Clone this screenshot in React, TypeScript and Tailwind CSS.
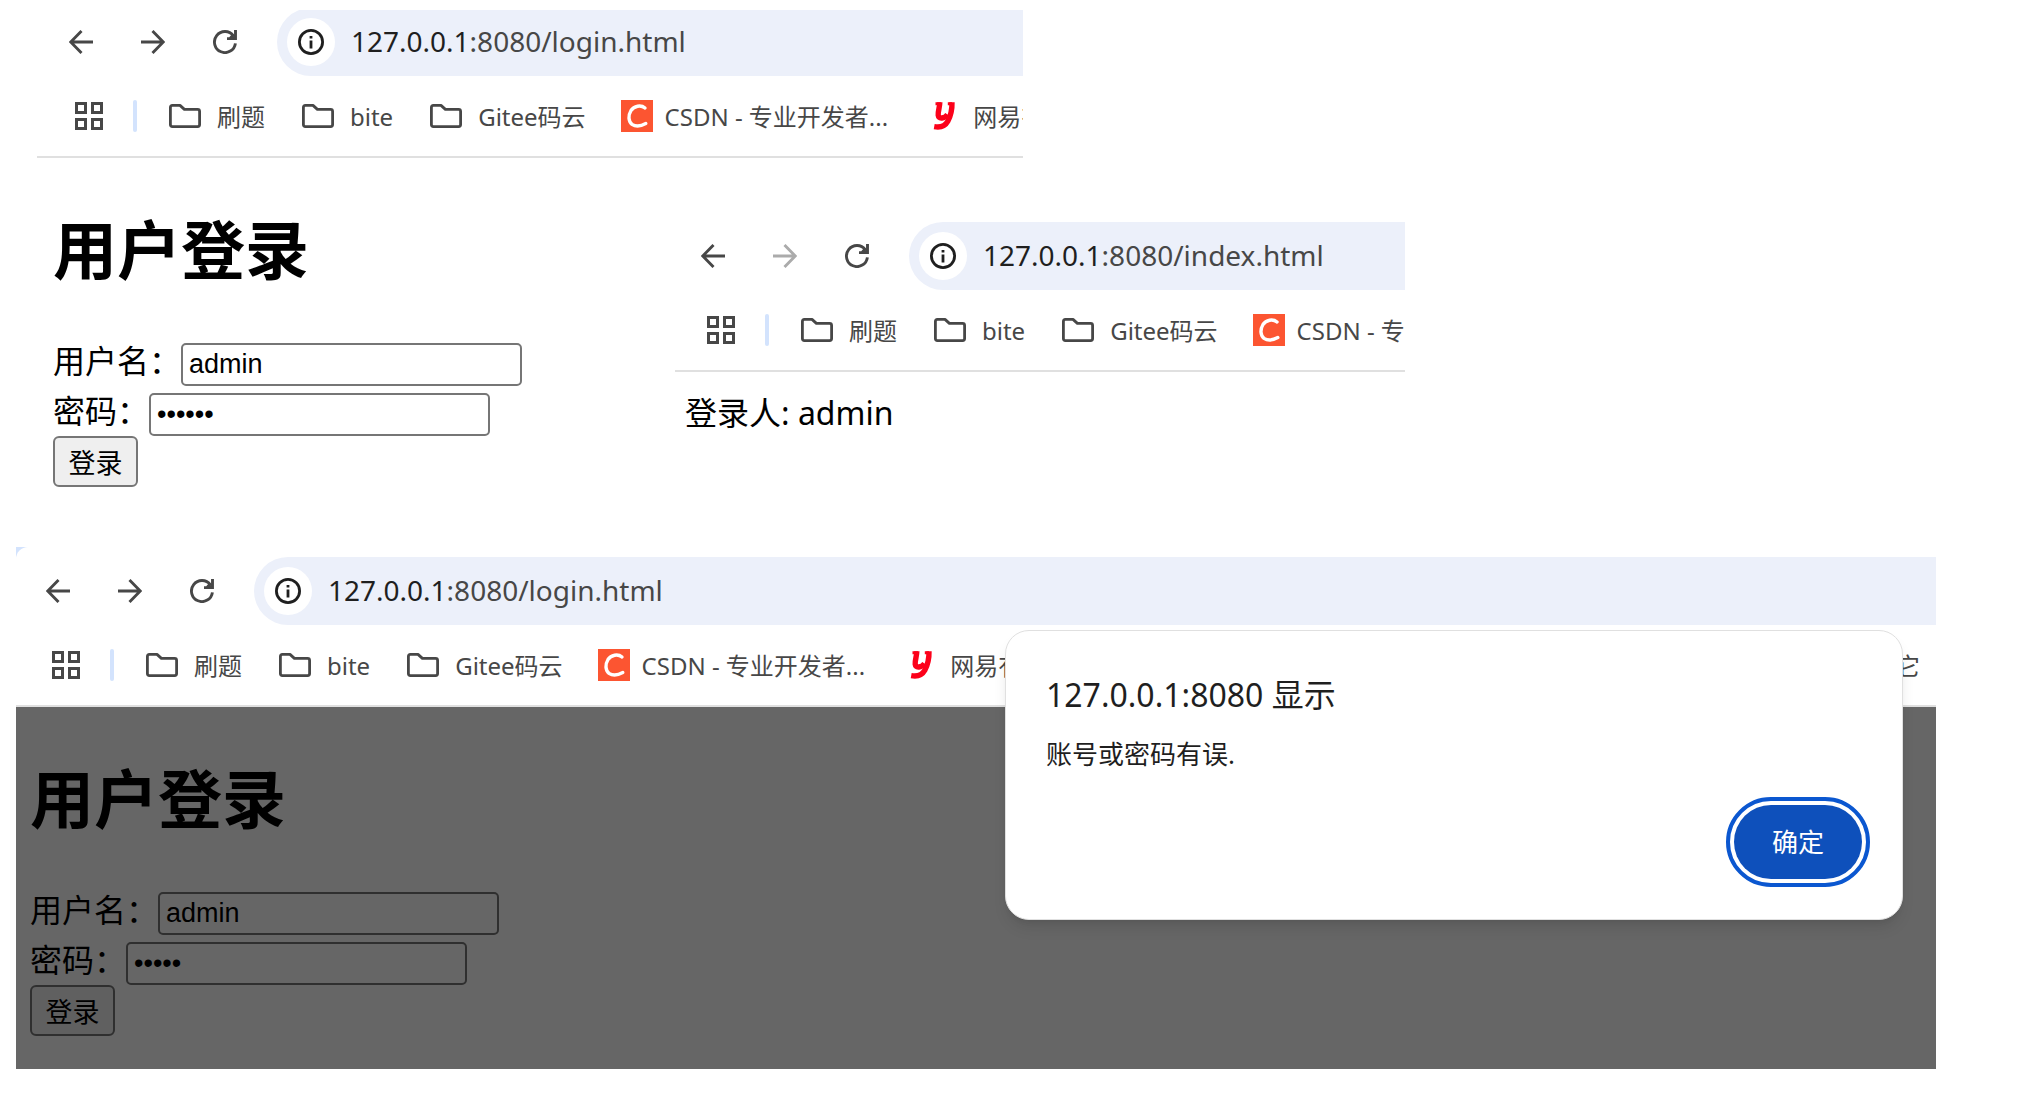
import type { ReactNode } from "react";

const uiFont = "font-['Noto_Sans','Noto_Sans_CJK_SC',sans-serif]";

const folders = ["刷题", "bite", "Gitee码云"];

function ArrowIcon({ forward = false }: { forward?: boolean }) {
  return (
    <svg width="24" height="24" viewBox="0 0 24 24" fill="none" stroke="currentColor" strokeWidth="2.9" aria-hidden="true">
      {forward ? (
        <path d="M0 12H22M11.5 1L22.3 12L11.5 23" />
      ) : (
        <path d="M24 12H2M12.5 1L1.7 12L12.5 23" />
      )}
    </svg>
  );
}

function ReloadIcon() {
  return (
    <svg width="24" height="24" viewBox="0 0 24 24" fill="none" stroke="currentColor" strokeWidth="2.9" aria-hidden="true">
      <path d="M22.4 13.3A10.5 10.5 0 1 1 20.4 5.8" />
      <path d="M22.5 0V8.6H14M22 8L17.5 8L20.5 4.5" />
    </svg>
  );
}

function InfoIcon() {
  return (
    <svg width="26" height="26" viewBox="0 0 26 26" fill="none" stroke="currentColor" strokeWidth="2.8" aria-hidden="true">
      <circle cx="13" cy="13" r="11.6" />
      <path d="M13 11.6V19.4M13 7V9.6" />
    </svg>
  );
}

function GridIcon() {
  return (
    <svg width="28" height="28" viewBox="0 0 28 28" fill="none" stroke="currentColor" strokeWidth="3" aria-hidden="true">
      <path d="M1.5 1.5h9v9h-9zM17.5 1.5h9v9h-9zM1.5 17.5h9v9h-9zM17.5 17.5h9v9h-9z" />
    </svg>
  );
}

function FolderIcon() {
  return (
    <svg width="36" height="24" viewBox="0 0 36 24" fill="none" stroke="currentColor" strokeWidth="2.8" strokeLinejoin="round" aria-hidden="true">
      <path d="M5.4 1.4H13L17.4 5.4H30.6Q32.6 5.4 32.6 7.4V20.6Q32.6 22.6 30.6 22.6H5.4Q3.4 22.6 3.4 20.6V3.4Q3.4 1.4 5.4 1.4Z" />
    </svg>
  );
}

function CsdnIcon() {
  return (
    <svg width="32" height="32" viewBox="0 0 32 32" fill="none" aria-hidden="true">
      <path d="M0 0h32v32H0z" fill="#fc5531" />
      <path d="M24 8C20 4.6 13 5.8 10 10.5C7 15.5 7.3 21.5 11 24.3C15 27 21 25.6 24.8 23.6" stroke="#fff" strokeWidth="3.4" strokeLinecap="round" />
    </svg>
  );
}

function YoudaoIcon() {
  return (
    <svg width="32" height="32" viewBox="0 0 32 32" fill="none" stroke="#fc011a" strokeWidth="5.4" aria-hidden="true">
      <path d="M10.8 2.3C10.8 7 8.8 11.500 9.200 15.200C9.800 19.400 15.500 18.700 18.500 14.500" />
      <path d="M6.500 3.800H12M18.800 3.800H23" strokeWidth="3" />
      <path d="M23 2.3C23.2 10 20.8 17.5 18.8 21.3C15.8 26.8 11 27.6 5.2 26.6" />
    </svg>
  );
}

type BrowserBarProps = {
  path: string;
  canGoForward?: boolean;
  tail?: string;
  className: string;
};

function BrowserBar({ path, canGoForward = true, tail, className }: BrowserBarProps) {
  return (
    <header className={`border-b-2 border-[#e0e0e0] bg-white text-[#474747] ${uiFont} ${className}`}>
      <nav className="flex h-17 items-center gap-12" aria-label="导航">
        <button type="button" aria-label="后退"><ArrowIcon /></button>
        <button type="button" aria-label="前进" className={canGoForward ? "" : "text-[#ababab]"}>
          <ArrowIcon forward />
        </button>
        <button type="button" aria-label="重新加载"><ReloadIcon /></button>
        <div className="-ml-2 flex h-full flex-1 items-center gap-4 rounded-l-full bg-[#ecf0fa] pl-2.5 text-[28px] whitespace-nowrap">
          <button type="button" aria-label="网站信息" className="flex size-12 shrink-0 items-center justify-center rounded-full bg-white text-[#1f1f1f]">
            <InfoIcon />
          </button>
          <p className="pb-0.5"><span className="text-[#1f1f1f]">127.0.0.1</span>:8080{path}</p>
        </div>
      </nav>
      <div className="flex h-20 items-center overflow-hidden pl-1.5 text-2xl whitespace-nowrap">
        <button type="button" aria-label="应用" className="shrink-0"><GridIcon /></button>
        <span className="mr-[30px] ml-[30px] h-8 w-1 shrink-0 rounded-full bg-[#d3e3fd]" />
        <div className="flex gap-[35px]">
          {folders.map((name) => (
            <a key={name} href="#" className="flex shrink-0 items-center gap-3.5">
              <FolderIcon />
              <span className="pt-0.5">{name}</span>
            </a>
          ))}
          <a href="#" className="flex shrink-0 items-center gap-3 pr-1.5">
            <CsdnIcon />
            <span className="pt-0.5">CSDN - 专业开发者...</span>
          </a>
          <a href="#" className="flex shrink-0 items-center gap-3">
            <YoudaoIcon />
            <span className="pt-0.5">网易有</span>
          </a>
        </div>
        {tail && <a href="#" className="mr-4 ml-auto pt-0.5">{tail}</a>}
      </div>
    </header>
  );
}

function LoginForm({ id, password, className }: { id: string; password: string; className: string }) {
  const row = "flex h-[50px] items-start pt-[7px] leading-8";
  const field = "h-[43px] w-[341px] rounded-[5px] border-2 border-[#767676] bg-white px-1.5 font-['Liberation_Sans',sans-serif] text-[27px]";
  return (
    <form className={`pt-[43px] font-['Noto_Sans_CJK_SC',sans-serif] text-[32px] text-black ${className}`}>
      <h1 className="mb-[45px] text-[64px] leading-[90px] font-bold">用户登录</h1>
      <div className={row}>
        <label htmlFor={`${id}-name`}>用户名：</label>
        <input id={`${id}-name`} type="text" defaultValue="admin" className={field} />
      </div>
      <div className={row}>
        <label htmlFor={`${id}-pass`}>密码：</label>
        <input id={`${id}-pass`} type="password" defaultValue={password} className={field} />
      </div>
      <button type="button" className="block h-[51px] w-[85px] rounded-md border-2 border-[#767676] bg-[#efefef] text-[27px] leading-none">
        登录
      </button>
    </form>
  );
}

function AlertDialog({ title, children }: { title: string; children: ReactNode }) {
  return (
    <div
      role="alertdialog"
      aria-label={title}
      className={`absolute top-[83px] right-[33px] flex h-[290px] w-[898px] flex-col rounded-3xl border border-[#e0e0e0] bg-white p-10 text-[#1f1f1f] shadow-lg ${uiFont}`}
    >
      <h2 className="text-[32px] leading-12">{title}</h2>
      <p className="mt-[15px] text-[26px] leading-10">{children}</p>
      <button
        type="button"
        className="mt-auto h-[74px] self-end rounded-full bg-[#0e50bb] px-[38px] text-[26px] text-white outline-4 outline-offset-4 outline-[#0b57d0]"
      >
        确定
      </button>
    </div>
  );
}

export default function App() {
  return (
    <main className="min-h-screen overflow-hidden bg-white">
      {/* login page, with the page it leads to laid over its right side */}
      <div className="grid grid-cols-[638fr_348fr_382fr_637fr] pt-2.5 pl-[37px]">
        <section className="col-span-2 col-start-1 row-start-1 min-w-0 overflow-hidden">
          <div className="-mt-0.5">
            <BrowserBar path="/login.html" className="pl-8" />
            <LoginForm id="login" password="123456" className="pl-4" />
          </div>
        </section>
        <section className="col-span-2 col-start-2 row-start-1 mt-[212px] min-w-0 self-start overflow-hidden bg-white">
          <BrowserBar path="/index.html" canGoForward={false} className="pl-[26px]" />
          <p className={`pt-[15px] pl-2.5 text-[32px] leading-13 text-black ${uiFont}`}>登录人: admin</p>
        </section>
      </div>

      {/* failed login */}
      <section className="relative mt-[60px] mr-[106px] ml-4 bg-[#d3e3fd]">
        <BrowserBar path="/login.html" tail="它" className="rounded-tl-xl pt-2.5 pl-[30px]" />
        <div className="relative bg-white pb-[33px]">
          <LoginForm id="retry" password="12345" className="pl-3.5" />
          <div className="absolute inset-0 bg-black/60" />
        </div>
        <AlertDialog title="127.0.0.1:8080 显示">账号或密码有误.</AlertDialog>
      </section>
    </main>
  );
}
